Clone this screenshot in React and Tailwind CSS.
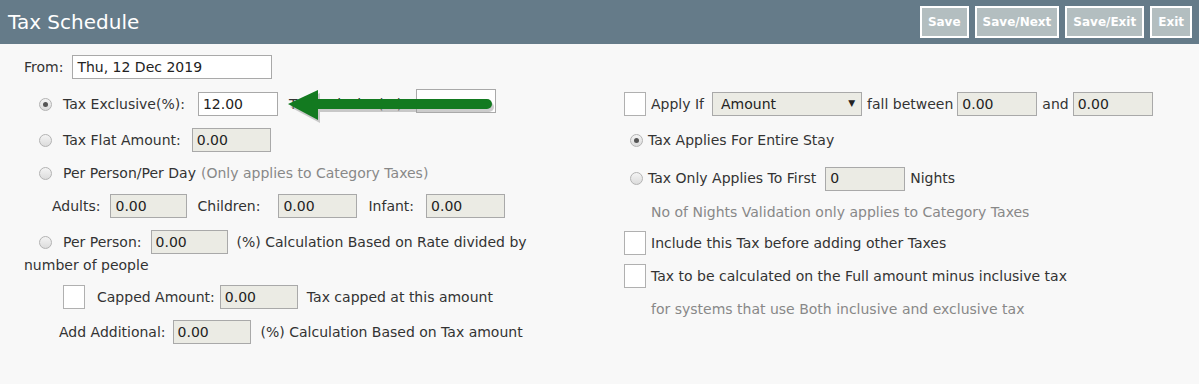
import React from "react";

const Radio = ({ checked }) => (
  <span className="inline-flex w-[13px] h-[13px] rounded-full border border-[#b3b3b3] bg-gradient-to-b from-[#f4f4f4] to-[#dcdcdc] items-center justify-center shrink-0">
    {checked && <span className="w-[5px] h-[5px] rounded-full bg-[#555]"></span>}
  </span>
);

const Box = () => (
  <span className="inline-block w-[22px] h-[24px] bg-white border border-[#b0b0b0] shrink-0"></span>
);

const Field = ({ value, w = "w-[79px]", white = false }) => (
  <span
    className={`inline-flex items-center h-[24px] ${w} px-[4px] border border-[#a9a9a9] ${
      white ? "bg-white" : "bg-[#ebebe4]"
    } text-[#222] shrink-0`}
  >
    {value}
  </span>
);

const Btn = ({ children }) => (
  <button className="h-[32px] px-[6px] border-2 border-white bg-[#b3bec0] text-white text-[12px] font-bold">
    {children}
  </button>
);

export default function App() {
  return (
    <div className="w-[1199px] h-[384px] bg-[#f8f8f8] text-[14px] text-[#333] font-['DejaVu_Sans',sans-serif] overflow-hidden">
      {/* Header */}
      <div className="h-[44px] bg-[#657b89] flex items-center justify-between pl-[8px] pr-[7px]">
        <h1 className="text-[20px] text-white">Tax Schedule</h1>
        <div className="flex gap-[6px]">
          <Btn>Save</Btn>
          <Btn>Save/Next</Btn>
          <Btn>Save/Exit</Btn>
          <Btn>Exit</Btn>
        </div>
      </div>

      <div className="flex">
        {/* Left column */}
        <div className="relative w-[600px] pl-[24px] pt-[11px]">
          <div className="flex items-center h-[24px] gap-[9px]">
            <span>From:</span>
            <Field value="Thu, 12 Dec 2019" w="w-[200px]" white />
          </div>

          <div className="flex items-center h-[24px] mt-[13px] pl-[15px]">
            <Radio checked />
            <span className="ml-[11px]">Tax Exclusive(%):</span>
            <span className="ml-[13px]"><Field value="12.00" w="w-[80px]" white /></span>
            <span className="ml-[11px]">Tax Inclusive(%):</span>
            <span className="ml-[9px]"><Field value="" w="w-[80px]" white /></span>
          </div>

          <div className="flex items-center h-[24px] mt-[12px] pl-[15px]">
            <Radio />
            <span className="ml-[11px]">Tax Flat Amount:</span>
            <span className="ml-[11px]"><Field value="0.00" /></span>
          </div>

          <div className="flex items-center h-[24px] mt-[9px] pl-[15px]">
            <Radio />
            <span className="ml-[11px]">Per Person/Per Day</span>
            <span className="ml-[5px] text-[#888]">(Only applies to Category Taxes)</span>
          </div>

          <div className="flex items-center h-[24px] mt-[9px] pl-[28px]">
            <span>Adults:</span>
            <span className="ml-[10px]"><Field value="0.00" w="w-[77px]" /></span>
            <span className="ml-[10px]">Children:</span>
            <span className="ml-[18px]"><Field value="0.00" /></span>
            <span className="ml-[11px]">Infant:</span>
            <span className="ml-[12px]"><Field value="0.00" /></span>
          </div>

          <div className="flex items-center h-[24px] mt-[12px] pl-[15px]">
            <Radio />
            <span className="ml-[11px]">Per Person:</span>
            <span className="ml-[9px]"><Field value="0.00" w="w-[77px]" /></span>
            <span className="ml-[9px]">(%) Calculation Based on Rate divided by</span>
          </div>
          <div className="leading-[20px] mt-[1px]">number of people</div>

          <div className="flex items-center h-[24px] mt-[10px] pl-[39px]">
            <Box />
            <span className="ml-[12px]">Capped Amount:</span>
            <span className="ml-[5px]"><Field value="0.00" w="w-[78px]" /></span>
            <span className="ml-[9px]">Tax capped at this amount</span>
          </div>

          <div className="flex items-center h-[24px] mt-[11px] pl-[35px]">
            <span>Add Additional:</span>
            <span className="ml-[7px]"><Field value="0.00" w="w-[78px]" /></span>
            <span className="ml-[10px]">(%) Calculation Based on Tax amount</span>
          </div>

          {/* annotation arrow */}
          <svg
            className="absolute left-[280px] top-[40px]"
            width="220"
            height="46"
            viewBox="0 0 220 46"
          >
            <g transform="translate(2,3)" fill="#9a9a9a" opacity="0.5">
              <polygon points="8,20 38,6 38,36" />
              <line x1="36" y1="20" x2="207" y2="20" stroke="#9a9a9a" strokeWidth="10" strokeLinecap="round" />
            </g>
            <polygon points="8,20 38,6 38,36" fill="#137a20" />
            <line x1="36" y1="20" x2="207" y2="20" stroke="#137a20" strokeWidth="10" strokeLinecap="round" />
          </svg>
        </div>

        {/* Right column */}
        <div className="flex-1 pt-[48px] pl-[24px]">
          <div className="flex items-center h-[24px]">
            <Box />
            <span className="ml-[5px]">Apply If</span>
            <span className="ml-[8px] relative inline-flex items-center h-[24px] w-[150px] pl-[8px] border border-[#a9a9a9] bg-[#ebebe4] text-[#222]">
              Amount
              <span className="absolute right-[6px] text-[9px]">▼</span>
            </span>
            <span className="ml-[5px]">fall between</span>
            <span className="ml-[4px]"><Field value="0.00" w="w-[80px]" /></span>
            <span className="ml-[5px]">and</span>
            <span className="ml-[4px]"><Field value="0.00" w="w-[80px]" /></span>
          </div>

          <div className="flex items-center h-[24px] mt-[12px] pl-[6px]">
            <Radio checked />
            <span className="ml-[5px]">Tax Applies For Entire Stay</span>
          </div>

          <div className="flex items-center h-[25px] mt-[14px] pl-[6px]">
            <Radio />
            <span className="ml-[5px]">Tax Only Applies To First</span>
            <span className="ml-[9px]"><Field value="0" w="w-[80px]" /></span>
            <span className="ml-[5px]">Nights</span>
          </div>

          <div className="h-[24px] mt-[9px] pl-[27px] flex items-center text-[#888]">
            No of Nights Validation only applies to Category Taxes
          </div>

          <div className="flex items-center h-[24px] mt-[7px]">
            <Box />
            <span className="ml-[5px]">Include this Tax before adding other Taxes</span>
          </div>

          <div className="flex items-center h-[24px] mt-[9px]">
            <Box />
            <span className="ml-[5px]">Tax to be calculated on the Full amount minus inclusive tax</span>
          </div>

          <div className="h-[24px] mt-[9px] pl-[27px] flex items-center text-[#888]">
            for systems that use Both inclusive and exclusive tax
          </div>
        </div>
      </div>
    </div>
  );
}
